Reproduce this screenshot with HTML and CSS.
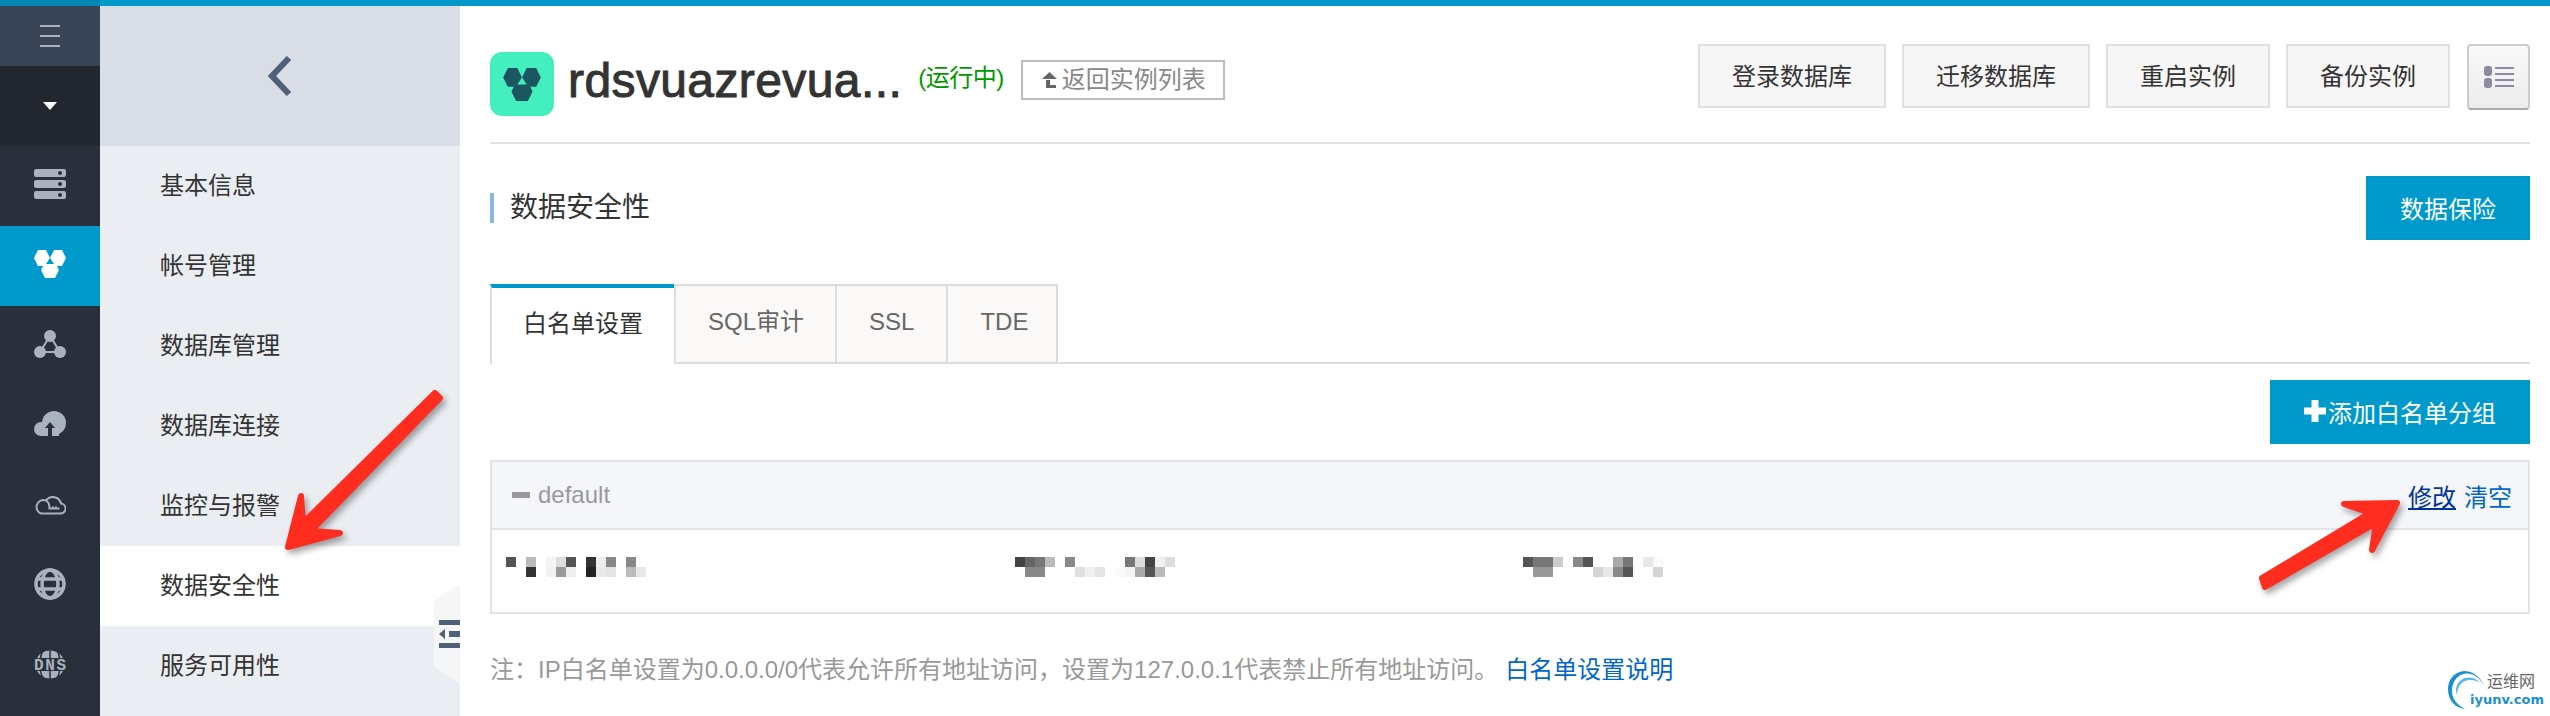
FILE: index.html
```html
<!DOCTYPE html>
<html lang="zh-CN">
<head>
    <meta charset="UTF-8">
    <title>数据安全性</title>
    <link rel="stylesheet" href="styles.css">
</head>
<body>
    <div class="topbar"><div class="topbar-left"></div></div>
    <div class="layout">
        <div class="rail">
            <div class="rail-menu">
                <svg width="20" height="22" viewBox="0 0 20 22"><path d="M0 0h20v2H0zM0 10h20v2H0zM0 20h20v2H0z" fill="#a8b0bd"/></svg>
            </div>
            <div class="rail-drop">
                <svg width="14" height="8" viewBox="0 0 14 8"><path d="M0 0h14L7 8z" fill="#fff"/></svg>
            </div>
            <div class="rail-item">
                <svg width="32" height="30" viewBox="0 0 32 30">
                    <rect width="32" height="8" y="0" rx="2" fill="#a9b2bd"/>
                    <rect width="32" height="8" y="11" rx="2" fill="#a9b2bd"/>
                    <rect width="32" height="8" y="22" rx="2" fill="#a9b2bd"/>
                    <circle cx="26" cy="4" r="2" fill="#29303b"/>
                    <circle cx="26" cy="15" r="2" fill="#29303b"/>
                    <circle cx="26" cy="26" r="2" fill="#29303b"/>
                </svg>
            </div>
            <div class="rail-item active">
                <svg width="32" height="28" viewBox="0 0 32 28">
                    <path d="M0 8L4 0h8l4 8-4 8H4zM16 8l4-8h8l4 8-4 8h-8zM7 20l4-8h10l4 8-4 8H11z" fill="#fff"/>
                    <path d="M16 8l4 6h-8z" fill="#0099cc"/>
                </svg>
            </div>
            <div class="rail-item">
                <svg width="32" height="28" viewBox="0 0 32 28">
                    <path d="M16 6L6 22h20z" fill="none" stroke="#a9b2bd" stroke-width="2"/>
                    <circle cx="16" cy="6" r="6" fill="#a9b2bd"/>
                    <circle cx="6" cy="22" r="6" fill="#a9b2bd"/>
                    <circle cx="26" cy="22" r="6" fill="#a9b2bd"/>
                </svg>
            </div>
            <div class="rail-item">
                <svg width="32" height="26" viewBox="0 0 32 26">
                    <circle cx="20" cy="12" r="12" fill="#a9b2bd"/>
                    <circle cx="7" cy="18" r="7" fill="#a9b2bd"/>
                    <path d="M7 18h18v7H7z" fill="#a9b2bd"/>
                    <path d="M16 11l5 6h-3v9h-4v-9h-3z" fill="#29303b"/>
                </svg>
            </div>
            <div class="rail-item">
                <svg width="32" height="22" viewBox="0 0 32 22" fill="none" stroke="#a9b2bd" stroke-width="2">
                    <path d="M7 20.500h19a5 5 0 0 0 1-10A8.500 8.500 0 0 0 12 7.500a6.500 6.500 0 0 0-5 13z"/>
                    <path d="M12 7.500q3.500 2 3.500 8h10M19 15.500v-2M22 15.500v-2"/>
                </svg>
            </div>
            <div class="rail-item">
                <svg width="32" height="32" viewBox="0 0 32 32" fill="none" stroke="#a9b2bd" stroke-width="3.500">
                    <circle cx="16" cy="16" r="14"/>
                    <ellipse cx="16" cy="16" rx="8" ry="14"/>
                    <path d="M3 11h26M3 21h26"/>
                </svg>
            </div>
            <div class="rail-item">
                <svg width="32" height="32" viewBox="0 0 32 32">
                    <path d="M3 10a15 15 0 0 1 26 0zM3 23a15 15 0 0 0 26 0z" fill="#a9b2bd"/>
                    <path d="M10 1.500q-3 3-3.500 8.500M22 1.500q3 3 3.500 8.500M16 1v9M10 31q-3-3-3.500-8M22 31q3-3 3.500-8M16 23v9" stroke="#29303b" stroke-width="1.500" fill="none"/>
                    <text x="0" y="22" class="dns-text" textLength="32" lengthAdjust="spacing">DNS</text>
                </svg>
            </div>
        </div>

        <div class="subnav">
            <div class="subnav-back">
                <svg width="24" height="40" viewBox="0 0 24 40"><path d="M21 2L4 20l17 18" fill="none" stroke="#4f6078" stroke-width="6"/></svg>
            </div>
            <a class="subnav-item">基本信息</a>
            <a class="subnav-item">帐号管理</a>
            <a class="subnav-item">数据库管理</a>
            <a class="subnav-item">数据库连接</a>
            <a class="subnav-item">监控与报警</a>
            <a class="subnav-item current">数据安全性</a>
            <a class="subnav-item">服务可用性</a>
        </div>

        <div class="main">
            <div class="page-head">
                <div class="instance">
                    <div class="instance-logo">
                        <svg width="38" height="33" viewBox="0 0 32 28">
                            <path d="M0 8L4 0h8l4 8-4 8H4zM16 8l4-8h8l4 8-4 8h-8zM7 20l4-8h10l4 8-4 8H11z" fill="#1d5560"/>
                            <path d="M16 8l4 6h-8z" fill="#43f0bd"/>
                        </svg>
                    </div>
                    <h1 class="instance-name">rdsvuazrevua...</h1>
                    <span class="instance-status">(运行中)</span>
                    <a class="back-link">
                        <svg width="15" height="16" viewBox="0 0 15 16"><path d="M7.500 0L15 7H0zM4 8h4v5h6v3H4z" fill="#666"/></svg>
                        返回实例列表
                    </a>
                </div>
                <div class="head-actions">
                    <button class="btn">登录数据库</button>
                    <button class="btn">迁移数据库</button>
                    <button class="btn">重启实例</button>
                    <button class="btn">备份实例</button>
                    <button class="btn-menu">
                        <svg width="30" height="22" viewBox="0 0 30 22">
                            <rect width="8" height="10" rx="3" fill="#8a8aa0"/>
                            <rect width="8" height="10" y="12" rx="3" fill="#8a8aa0"/>
                            <path d="M11 1h19v2H11zM11 7h19v2H11zM11 13h19v2H11zM11 19h19v2H11z" fill="#8a8aa0"/>
                        </svg>
                    </button>
                </div>
            </div>

            <div class="section-head">
                <h2 class="section-title">数据安全性</h2>
                <button class="btn-primary">数据保险</button>
            </div>

            <div class="tabs">
                <a class="tab selected">白名单设置</a>
                <a class="tab narrow">SQL审计</a>
                <a class="tab">SSL</a>
                <a class="tab last">TDE</a>
            </div>

            <div class="toolbar">
                <button class="btn-primary btn-add">
                    <svg width="22" height="22" viewBox="0 0 22 22"><path d="M7.500 0h7v7.500H22v7h-7.500V22h-7v-7.500H0v-7h7.500z" fill="#fff"/></svg>
                    添加白名单分组
                </button>
            </div>

            <div class="panel">
                <div class="panel-head">
                    <div class="panel-name"><span class="minus"></span>default</div>
                    <div class="panel-links">
                        <a class="link-edit">修改</a>
                        <a class="link-clear">清空</a>
                    </div>
                </div>
                <div class="panel-body">
                    <svg class="mosaic" width="140" height="20" viewBox="0 0 140 20">
                        <rect x="0" width="10" height="10" fill="#555"/>
                        <rect x="20" width="10" height="10" fill="#bbb"/><rect x="20" y="10" width="10" height="10" fill="#333"/>
                        <rect x="40" width="10" height="10" fill="#f5f5f5"/><rect x="40" y="10" width="10" height="10" fill="#f0f0f0"/>
                        <rect x="50" width="10" height="10" fill="#ddd"/><rect x="50" y="10" width="10" height="10" fill="#999"/>
                        <rect x="60" width="10" height="10" fill="#555"/><rect x="60" y="10" width="10" height="10" fill="#eee"/>
                        <rect x="80" width="10" height="10" fill="#333"/><rect x="80" y="10" width="10" height="10" fill="#222"/>
                        <rect x="90" width="10" height="10" fill="#eee"/><rect x="90" y="10" width="10" height="10" fill="#e8e8e8"/>
                        <rect x="100" width="10" height="10" fill="#888"/><rect x="100" y="10" width="10" height="10" fill="#e5e5e5"/>
                        <rect x="120" width="10" height="10" fill="#888"/><rect x="120" y="10" width="10" height="10" fill="#bbb"/>
                        <rect x="130" y="10" width="10" height="10" fill="#e8e8e8"/>
                    </svg>
                    <svg class="mosaic" width="160" height="20" viewBox="0 0 160 20">
                        <rect x="0" width="10" height="10" fill="#444"/>
                        <rect x="10" width="10" height="10" fill="#666"/><rect x="10" y="10" width="10" height="10" fill="#888"/>
                        <rect x="20" width="10" height="10" fill="#777"/><rect x="20" y="10" width="10" height="10" fill="#888"/>
                        <rect x="30" width="10" height="10" fill="#bbb"/>
                        <rect x="50" width="10" height="10" fill="#888"/>
                        <rect x="60" y="10" width="10" height="10" fill="#e0e0e0"/>
                        <rect x="70" y="10" width="10" height="10" fill="#f0f0f0"/>
                        <rect x="80" y="10" width="10" height="10" fill="#e5e5e5"/>
                        <rect x="100" y="10" width="10" height="10" fill="#fafafa"/>
                        <rect x="110" width="10" height="10" fill="#777"/><rect x="110" y="10" width="10" height="10" fill="#f5f5f5"/>
                        <rect x="120" width="10" height="10" fill="#ddd"/><rect x="120" y="10" width="10" height="10" fill="#aaa"/>
                        <rect x="130" width="10" height="10" fill="#444"/><rect x="130" y="10" width="10" height="10" fill="#555"/>
                        <rect x="140" width="10" height="10" fill="#f0f0f0"/><rect x="140" y="10" width="10" height="10" fill="#bbb"/>
                        <rect x="150" width="10" height="10" fill="#ddd"/>
                    </svg>
                    <svg class="mosaic" width="140" height="20" viewBox="0 0 140 20">
                        <rect x="0" width="10" height="10" fill="#555"/>
                        <rect x="10" width="10" height="10" fill="#777"/><rect x="10" y="10" width="10" height="10" fill="#999"/>
                        <rect x="20" width="10" height="10" fill="#777"/><rect x="20" y="10" width="10" height="10" fill="#999"/>
                        <rect x="30" width="10" height="10" fill="#ccc"/>
                        <rect x="50" width="10" height="10" fill="#888"/>
                        <rect x="60" width="10" height="10" fill="#555"/>
                        <rect x="70" y="10" width="10" height="10" fill="#d5d5d5"/>
                        <rect x="80" y="10" width="10" height="10" fill="#e8e8e8"/>
                        <rect x="90" width="10" height="10" fill="#aaa"/><rect x="90" y="10" width="10" height="10" fill="#888"/>
                        <rect x="100" width="10" height="10" fill="#777"/><rect x="100" y="10" width="10" height="10" fill="#555"/>
                        <rect x="120" width="10" height="10" fill="#e8e8e8"/>
                        <rect x="130" width="10" height="10" fill="#fafafa"/><rect x="130" y="10" width="10" height="10" fill="#d5d5d5"/>
                    </svg>
                </div>
            </div>

            <p class="note">注：IP白名单设置为0.0.0.0/0代表允许所有地址访问，设置为127.0.0.1代表禁止所有地址访问。<a class="note-link">白名单设置说明</a></p>
        </div>
    </div>

    <div class="collapse-handle">
        <svg width="21" height="28" viewBox="0 0 21 28"><path d="M0 0h21v5H0zM10 11h11v6H10zM0 23h21v5H0zM6 9v10l-6-5z" fill="#4f6078"/></svg>
    </div>

    <svg class="arrows" width="2550" height="716" viewBox="0 0 2550 716">
        <path class="arrow" d="M435 393L303 523 301 496 288 547 340 533 311 531 440 398z"/>
        <path class="arrow" d="M2397 503L2344 504 2370 513 2262 578 2265 587 2376 523 2372 550z"/>
    </svg>

    <div class="watermark">
        <svg width="40" height="40" viewBox="0 0 40 40">
            <path d="M37 16C33 5 24 1 17 1 7 2 1 10 1 19c0 11 7 19 17 20C10 35 4 28 5 19 6 10 12 4 19 3.500 27 3 33 8 37 16z" fill="#1b8fd2"/>
            <path d="M33 13C28 7 20 6 14 10 9 14 8 20 10 25c0-6 3-12 8-14 5-2 11-1 15 2z" fill="#5bb8e8"/>
        </svg>
        <span class="watermark-cn">运维网</span>
        <span class="watermark-en">iyunv.com</span>
    </div>
</body>
</html>
```

FILE: styles.css
```css
html, body {
    margin: 0;
    padding: 0;
    width: 2550px;
    height: 716px;
    overflow: hidden;
    background: #fff;
    font-family: "Liberation Sans", "Noto Sans CJK SC", sans-serif;
    font-size: 24px;
    color: #333;
}
.topbar {
    height: 6px;
    background: #0099cc;
}
.topbar-left {
    width: 100px;
    height: 6px;
    background: #0286b3;
}
.layout {
    display: flex;
    height: 710px;
}

/* left icon rail */
.rail {
    width: 100px;
    flex: none;
    background: #29303b;
}
.rail svg {
    display: block;
}
.rail-menu {
    height: 60px;
    background: #3a4457;
    display: flex;
    align-items: center;
    justify-content: center;
}
.rail-drop {
    height: 80px;
    background: #22262e;
    display: flex;
    align-items: center;
    justify-content: center;
}
.rail-item {
    height: 76px;
    padding-bottom: 4px;
    display: flex;
    align-items: center;
    justify-content: center;
}
.rail-item.active {
    background: #0099cc;
}
.dns-text {
    font-family: "Liberation Mono", monospace;
    font-weight: bold;
    font-size: 16px;
    fill: #a9b2bd;
}

/* second level nav */
.subnav {
    width: 360px;
    flex: none;
    background: #eaedf2;
}
.subnav-back {
    height: 140px;
    background: #d9dde6;
    display: flex;
    align-items: center;
    justify-content: center;
}
.subnav-item {
    display: block;
    height: 80px;
    line-height: 80px;
    padding-left: 60px;
    color: #333;
}
.subnav-item.current {
    background: #fff;
}
.collapse-handle {
    position: absolute;
    left: 434px;
    top: 584px;
    width: 26px;
    height: 100px;
    background: #f5f6f7;
    clip-path: polygon(100% 0, 100% 100%, 0 82%, 0 17%);
    display: flex;
    align-items: center;
    justify-content: flex-end;
}

/* main content */
.main {
    flex: 1;
    padding: 0 20px 0 30px;
}
.page-head {
    height: 136px;
    border-bottom: 2px solid #e0e0e0;
    display: flex;
    justify-content: space-between;
    align-items: flex-start;
}
.instance {
    display: flex;
    align-items: flex-start;
    margin-top: 46px;
}
.instance-logo {
    width: 64px;
    height: 64px;
    border-radius: 12px;
    background: #43f0bd;
    display: flex;
    align-items: center;
    justify-content: center;
}
.instance-name {
    margin: 5px 0 0 14px;
    font-size: 48px;
    line-height: 48px;
    font-weight: normal;
    letter-spacing: 0.4px;
    color: #333;
    -webkit-text-stroke: 1px #333;
}
.instance-status {
    margin: 8px 0 0 16px;
    line-height: 36px;
    letter-spacing: -0.5px;
    color: #090;
}
.back-link {
    margin: 8px 0 0 17px;
    box-sizing: border-box;
    width: 204px;
    height: 40px;
    border: 2px solid #bbb;
    color: #888;
    line-height: 34px;
    display: flex;
    align-items: center;
    gap: 5px;
    padding-left: 19px;
}
.head-actions {
    display: flex;
    gap: 16px;
    margin-top: 38px;
}
.btn {
    height: 64px;
    padding: 0 32px 3px;
    border: 2px solid #e0e0e0;
    background: #f6f6f6;
    color: #333;
    font: inherit;
}
.btn-menu {
    width: 63px;
    height: 66px;
    padding: 0;
    margin-left: 1px;
    border: 2px solid #ccc;
    border-bottom-color: #aaa;
    border-radius: 4px;
    background: linear-gradient(#f9f9f9, #ececec);
    display: flex;
    align-items: center;
    justify-content: center;
}
.section-head {
    margin-top: 32px;
    height: 64px;
    display: flex;
    justify-content: space-between;
    align-items: center;
}
.section-title {
    margin: 0;
    border-left: 4px solid #88b7e0;
    padding-left: 16px;
    font-size: 28px;
    line-height: 30px;
    font-weight: normal;
    color: #333;
}
.btn-primary {
    height: 64px;
    padding: 0 34px 2px;
    border: 0;
    background: #0099cc;
    color: #fff;
    font: inherit;
}
.btn-add {
    display: flex;
    align-items: center;
    gap: 2px;
}

/* tabs */
.tabs {
    margin-top: 44px;
    height: 78px;
    border-bottom: 2px solid #ddd;
    display: flex;
}
.tab {
    box-sizing: border-box;
    height: 78px;
    line-height: 72px;
    padding: 0 32px;
    border-top: 2px solid #ddd;
    border-left: 2px solid #ddd;
    background: #faf9f7;
    color: #666;
}
.tab.selected {
    height: 80px;
    padding: 0 31px 0 31px;
    border-top: 4px solid #0099cc;
    background: #fff;
    color: #333;
}
.tab.narrow {
    padding-right: 31px;
}
.tab.last {
    padding-right: 28px;
    border-right: 2px solid #ddd;
}
.toolbar {
    margin-top: 16px;
    display: flex;
    justify-content: flex-end;
}

/* white list panel */
.panel {
    margin-top: 16px;
    border: 2px solid #e1e5ea;
}
.panel-head {
    box-sizing: border-box;
    height: 68px;
    border-bottom: 2px solid #e1e5ea;
    background: #f4f6fa;
    padding: 0 16px 0 20px;
    display: flex;
    justify-content: space-between;
    align-items: center;
}
.panel-name {
    display: flex;
    align-items: center;
    gap: 8px;
    color: #999;
}
.minus {
    width: 18px;
    height: 6px;
    background: #999;
}
.panel-links {
    display: flex;
    gap: 8px;
}
.link-edit {
    color: #003399;
    text-decoration: underline;
}
.link-clear {
    color: #0066cc;
}
.panel-body {
    height: 82px;
    box-sizing: border-box;
    padding: 27px 0 0 14px;
    display: grid;
    grid-template-columns: 509px 508px 1fr;
    align-items: start;
}
.mosaic {
    display: block;
}
.note {
    margin: 38px 0 0;
    line-height: 36px;
    color: #999;
}
.note-link {
    margin-left: 7px;
    color: #0066cc;
}

/* overlays */
.arrows {
    position: absolute;
    left: 0;
    top: 0;
    pointer-events: none;
}
.arrow {
    fill: #ff2d1f;
    stroke: #ff2d1f;
    stroke-width: 6;
    stroke-linejoin: round;
    filter: drop-shadow(3px 4px 3px rgba(0, 0, 0, 0.35));
}
.watermark {
    position: absolute;
    left: 2447px;
    top: 670px;
    width: 103px;
    height: 42px;
}
.watermark svg {
    position: absolute;
    left: 0;
    top: 0;
}
.watermark-cn {
    position: absolute;
    left: 40px;
    top: 0;
    font-size: 16px;
    line-height: 24px;
    color: #666;
}
.watermark-en {
    position: absolute;
    left: 23px;
    top: 21px;
    font-family: "DejaVu Sans", sans-serif;
    font-size: 13px;
    line-height: 18px;
    font-weight: bold;
    color: #1b8fd2;
}
```
